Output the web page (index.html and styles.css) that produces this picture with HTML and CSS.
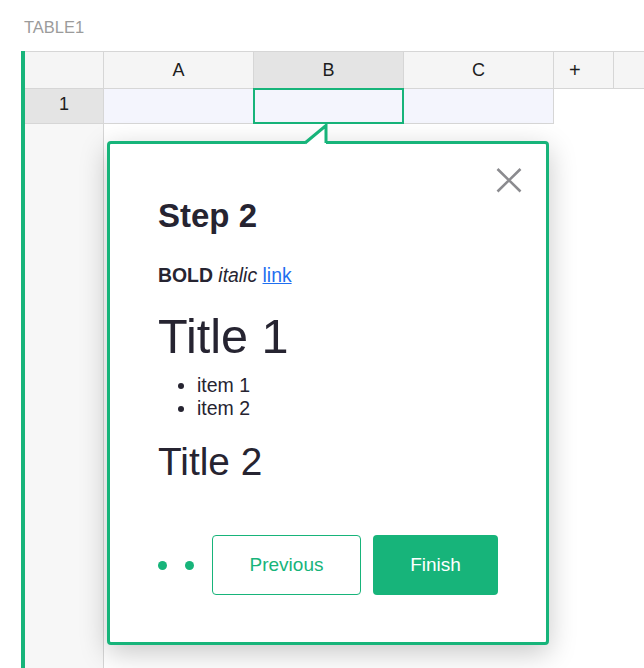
FILE: index.html
```html
<!DOCTYPE html>
<html>
<head>
<meta charset="utf-8">
<link rel="stylesheet" href="styles.css">
</head>
<body>
<div class="label">TABLE1</div>
<div class="sheet">
  <div class="grid">
    <div class="hd corner"></div>
    <div class="hd">A</div>
    <div class="hd hd-sel">B</div>
    <div class="hd">C</div>
    <div class="hd plus">+</div>
    <div class="hd rest"></div>
    <div class="rh">1</div>
    <div class="cell"></div>
    <div class="cell active"><span class="sel-box"></span></div>
    <div class="cell"></div>
    <div class="blank span2"></div>
    <div class="rh-fill"></div>
    <div class="blank span5"></div>
  </div>
</div>

<div class="pop">
  <svg class="arrow" width="32" height="24" viewBox="0 0 32 24">
    <polygon points="4,23 26,3 26,23" fill="#fff"/>
    <polyline points="5,21 26,3.5 26,21" fill="none" stroke="#17b47a" stroke-width="3" stroke-linejoin="miter"/>
  </svg>
  <svg class="close" width="26" height="26" viewBox="0 0 26 26">
    <path d="M1.5 1 L24.5 23.5 M24.5 1 L1.5 23.5" stroke="#8b8b8f" stroke-width="2.6" fill="none"/>
  </svg>
  <h2 class="step">Step 2</h2>
  <p class="rich"><b>BOLD</b> <i>italic</i> <a href="#">link</a></p>
  <h1 class="t1">Title 1</h1>
  <ul class="list">
    <li>item 1</li>
    <li>item 2</li>
  </ul>
  <h3 class="t2">Title 2</h3>
  <div class="foot">
    <div class="dots"><span class="dot"></span><span class="dot"></span></div>
    <button class="btn prev">Previous</button>
    <button class="btn finish">Finish</button>
  </div>
</div>
</body>
</html>
```
FILE: styles.css
```css
html, body {
  margin: 0;
  padding: 0;
  height: 100%;
  overflow: hidden;
  background: #fff;
  font-family: "Liberation Sans", Arial, sans-serif;
}

.label {
  height: 51px;
  box-sizing: border-box;
  padding: 18px 0 0 24px;
  font-size: 16.5px;
  line-height: 18px;
  color: #9b9b9b;
}

.sheet {
  margin-left: 21px;
  border-left: 4px solid #17b47a;
  height: calc(100vh - 51px);
  box-sizing: border-box;
}

.grid {
  display: grid;
  grid-template-columns: 79px 150px 150px 150px 60px 1fr;
  grid-template-rows: 38px 35px 1fr;
  height: 100%;
}

.hd {
  background: #f5f5f5;
  border-top: 1px solid #d6d6d6;
  border-bottom: 1px solid #d6d6d6;
  border-right: 1px solid #d6d6d6;
  display: flex;
  align-items: center;
  justify-content: center;
  font-size: 18px;
  color: #1d1d1d;
}
.hd-sel { background: #e4e4e4; }
.plus { justify-content: flex-start; padding-left: 15px; font-size: 20px; }
.rest { border-right: none; }

.rh {
  background: #e4e4e4;
  border-right: 1px solid #d6d6d6;
  border-bottom: 1px solid #d6d6d6;
  display: flex;
  align-items: center;
  justify-content: center;
  font-size: 18px;
  color: #1d1d1d;
  padding-bottom: 3px;
  box-sizing: border-box;
}

.cell {
  background: #f4f5fd;
  border-right: 1px solid #d6d6d6;
  border-bottom: 1px solid #d6d6d6;
}
.active { position: relative; }
.sel-box {
  position: absolute;
  left: -1px;
  top: -1px;
  right: -1px;
  bottom: -1px;
  border: 2px solid #17b47a;
}

.blank { background: #fff; }
.span2 { grid-column: span 2; }
.span5 { grid-column: span 5; }

.rh-fill {
  background: #f7f7f7;
  border-right: 1px solid #d6d6d6;
}

.pop {
  position: absolute;
  left: 107px;
  top: 141px;
  width: 442px;
  height: 504px;
  box-sizing: border-box;
  border: 3px solid #17b47a;
  border-radius: 4px;
  background: #fff;
  padding: 52px 48px 0;
  box-shadow: 0 8px 28px rgba(0, 0, 0, 0.22);
  color: #262431;
}

.arrow {
  position: absolute;
  left: 190px;
  top: -22px;
}

.close {
  position: absolute;
  right: 24px;
  top: 24px;
}

.step {
  margin: 0;
  font-size: 33px;
  line-height: 40px;
  font-weight: 700;
}

.rich {
  margin: 28px 0 0;
  font-size: 19.4px;
  line-height: 23px;
}
.rich a { color: #1f6ff0; }

.t1 {
  margin: 22px 0 0;
  font-size: 48.6px;
  line-height: 55px;
  font-weight: 400;
}

.list {
  margin: 10px 0 0;
  padding-left: 39px;
  font-size: 19.5px;
  line-height: 23px;
}

.t2 {
  margin: 20px 0 0;
  font-size: 38.8px;
  line-height: 44px;
  font-weight: 400;
}

.foot {
  margin-top: 51px;
  display: flex;
  align-items: center;
  height: 60px;
}

.dots {
  display: flex;
  gap: 18px;
  margin-right: 18px;
}
.dot {
  width: 9px;
  height: 9px;
  border-radius: 50%;
  background: #17b47a;
}

.btn {
  height: 60px;
  border-radius: 4px;
  font-family: "Liberation Sans", Arial, sans-serif;
  font-size: 19px;
  padding: 0;
  cursor: pointer;
}
.prev {
  width: 149px;
  background: #fff;
  border: 1px solid #17b47a;
  color: #17b47a;
}
.finish {
  width: 125px;
  margin-left: 12px;
  background: #17b47a;
  border: none;
  color: #fff;
}
```
